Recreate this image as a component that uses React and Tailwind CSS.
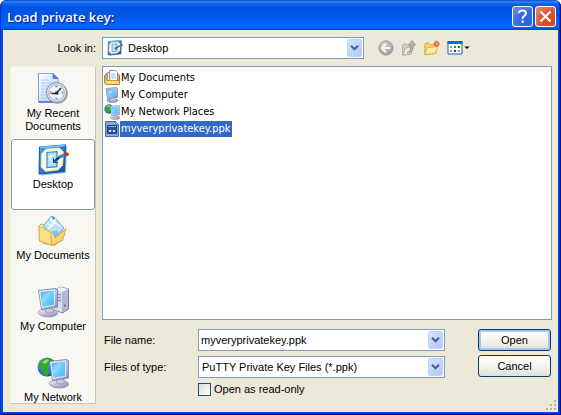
import React from "react";

const UI = "font-['Liberation_Sans',Arial,sans-serif] text-[11px] leading-[13px]";
const LIST = "font-['DejaVu_Sans_Condensed','DejaVu_Sans',sans-serif] text-[11px] leading-[16px]";

function Defs() {
  return (
    <svg className="absolute h-0 w-0" aria-hidden="true">
      <defs>
        <linearGradient id="screen" x1="0" y1="0" x2="1" y2="1">
          <stop offset="0" stopColor="#2b9bf0" />
          <stop offset=".5" stopColor="#6fd0fb" />
          <stop offset="1" stopColor="#43b2f6" />
        </linearGradient>
        <linearGradient id="metal" x1="0" y1="0" x2="1" y2="1">
          <stop offset="0" stopColor="#f4f4fb" />
          <stop offset="1" stopColor="#8f90bd" />
        </linearGradient>
        <linearGradient id="paper" x1="0" y1="0" x2="1" y2="1">
          <stop offset="0" stopColor="#ffffff" />
          <stop offset="1" stopColor="#a9cdfb" />
        </linearGradient>
        <linearGradient id="folder" x1="0" y1="0" x2="1" y2="1">
          <stop offset="0" stopColor="#fff3a6" />
          <stop offset="1" stopColor="#eebb3c" />
        </linearGradient>
        <linearGradient id="pad" x1="0" y1="0" x2="1" y2="1">
          <stop offset="0" stopColor="#4ba4f2" />
          <stop offset="1" stopColor="#0c4fae" />
        </linearGradient>
        <radialGradient id="globe" cx=".35" cy=".3" r=".8">
          <stop offset="0" stopColor="#6db4ff" />
          <stop offset="1" stopColor="#0a3fae" />
        </radialGradient>
        <radialGradient id="grayball" cx=".4" cy=".3" r=".8">
          <stop offset="0" stopColor="#d2d2d2" />
          <stop offset="1" stopColor="#959595" />
        </radialGradient>
      </defs>
    </svg>
  );
}

function RecentIcon() {
  return (
    <svg width="32" height="32" viewBox="0 0 32 32" aria-hidden="true">
      <path d="M1.500 .5H16l5 5V29.500H1.500z" fill="url(#paper)" stroke="#7ba3e0" />
      <path d="M16 .5v5h5z" fill="#4f86dc" stroke="#3d72cb" strokeWidth=".6" />
      <path d="M4 7h8M4 10h12M4 13h9M4 16h6M4 19h5M4 22h5M4 25h6" stroke="#a9c8f4" />
      <path d="M2 29h14" stroke="#5a89d6" strokeWidth="2" />
      <circle cx="20.500" cy="20.500" r="10.500" fill="#706e78" opacity=".55" />
      <circle cx="19.500" cy="19.500" r="10" fill="#e2e3ea" stroke="#8a8b9b" />
      <circle cx="19.500" cy="19.500" r="7.800" fill="#e9f6ff" stroke="#8db9e2" />
      <path d="M18.500 13.500h2M18.500 25.500h2M13.500 18.500v2M25.500 18.500v2" stroke="#f0663a" strokeWidth="1.600" />
      <path d="M24 15l-4.500 5M14.500 20.500h7" stroke="#1b2634" strokeWidth="1.500" fill="none" />
      <circle cx="19.500" cy="20" r="1.500" fill="#1b2634" />
    </svg>
  );
}

function DesktopIcon({ size = 32 }) {
  return (
    <svg width={size} height={size} viewBox="0 0 32 32" aria-hidden="true">
      <path d="M4 4L30 2.500 29 29 4 31.500z" fill="#5f6c85" opacity=".5" />
      <path d="M2.500 3L28.500.8 27.500 27.500 2 30z" fill="url(#pad)" stroke="#0d57b8" />
      <path d="M3 3.500L28 1.500" stroke="#7ecbfd" strokeWidth="1.500" />
      <path d="M9 5l13-1.200 4.500 4-.8 13.500L21 26 8.500 27.500 4 23l.5-13.500z" fill="#fdf8dc" stroke="#f2dd96" strokeWidth=".7" />
      <path d="M10 8.500l10-.8v15L10 23.500z" fill="#b4e1fc" stroke="#2a8ade" strokeWidth="1.200" />
      <path d="M12 12l4-2-3 8z" fill="#e6f6ff" />
      <path d="M16 17l5.500-4.500 1.500 2-5 3.500z" fill="#123a75" />
      <path d="M21.500 12.200l6-2.500.8 2-5.500 2.500z" fill="#3f92e2" stroke="#16539d" strokeWidth=".6" />
      <circle cx="29.800" cy="10.200" r="2" fill="#cf3a1c" />
      <path d="M16.500 14v4.500h4" stroke="#123a75" fill="none" />
    </svg>
  );
}

function DocumentsIcon() {
  return (
    <svg width="32" height="32" viewBox="0 0 32 32" aria-hidden="true">
      <path d="M5 29l13 2 11-12-4-2z" fill="#777" opacity=".5" />
      <path d="M2 11l2-2 5 1 3 3 14 3v3L14 30 2.500 26z" fill="url(#folder)" stroke="#d2a13a" />
      <path d="M6 11L14 1.500l3 .5 10 11-9 10z" fill="#b9e0fd" stroke="#67aaea" />
      <path d="M13.500 3l2 4 3-3M10 8l4 3 5-5M11 14l7-6 5 3" stroke="#fff" strokeWidth="1.400" fill="none" />
      <path d="M15 1.500l3 2-2 1z" fill="#2a78cb" />
      <path d="M2 11l12 6.500 1 12.500L2.500 26z" fill="#fbe083" stroke="#dcb04b" strokeWidth=".8" />
      <path d="M14 17.500L17 16l1 7 11-9.500-3.500 12L14.500 30.500z" fill="url(#folder)" stroke="#d09d30" strokeWidth=".8" />
      <path d="M15 18l5-3 2 4-4 4z" fill="#69b8f4" opacity=".75" />
    </svg>
  );
}

function Monitor({ x = 0, y = 0 }) {
  return (
    <g transform={`translate(${x} ${y})`}>
      <ellipse cx="11" cy="25.500" rx="9.500" ry="4" fill="#7d7e96" opacity=".7" />
      <ellipse cx="10" cy="24.500" rx="9.500" ry="3.800" fill="url(#metal)" stroke="#9596b7" strokeWidth=".7" />
      <path d="M8 20h7l1 4q-4 2-8 0z" fill="#c8c9e1" stroke="#8788b0" strokeWidth=".6" />
      <path d="M1 2.500L17.500.5l2.500 1V19L4 21.500z" fill="url(#metal)" stroke="#7778a6" strokeWidth=".8" />
      <path d="M2.500 4L17 2v15L4.500 19.500z" fill="url(#screen)" stroke="#e9f7ff" strokeWidth=".8" />
      <path d="M4 5.500L13 4Q10 12 5 15z" fill="#fff" opacity=".28" />
    </g>
  );
}

function ComputerIcon() {
  return (
    <svg width="32" height="32" viewBox="0 0 32 32" aria-hidden="true">
      <path d="M18 4l5-3 8.500 2v20l-6 4L18 24z" fill="#b4b5d7" stroke="#7778a6" />
      <path d="M18 4l7 2v20l-7-2z" fill="#dbdcee" />
      <path d="M18 4l5-3 8.500 2L25 6z" fill="#f2f2fa" />
      <path d="M20 8l4 1M20 11l4 1M20 14l4 1" stroke="#7879a7" />
      <circle cx="27.800" cy="19.500" r="1" fill="#5f6096" />
      <Monitor x={0.5} y={2} />
    </svg>
  );
}

function NetworkIcon({ size = 32 }) {
  return (
    <svg width={size} height={size} viewBox="0 0 32 32" aria-hidden="true">
      <circle cx="10" cy="10" r="9.500" fill="url(#globe)" />
      <path d="M3 5Q8-.5 14 1.500l2 4-4 2-2 4 3 3-3 5-4-2-1-5-4-3z" fill="#35a52c" />
      <path d="M5 5l5-3 2 2-4 3z" fill="#8ddc65" />
      <path d="M14 14l4-2v5l-4 2z" fill="#248c2c" />
      <Monitor x={11.5} y={2} />
    </svg>
  );
}

function SmallDocuments() {
  return (
    <svg width="16" height="16" viewBox="0 0 16 16" aria-hidden="true">
      <path d="M.5 5.500l2-2H14l1.500 2v9H2l-1.500-2z" fill="#e7b53a" stroke="#a8791c" />
      <path d="M3.500 2.500h7v9h-7z" fill="#fff" stroke="#8c9ab5" />
      <path d="M5.500.5h6l2 2v9h-8z" fill="#fff" stroke="#7e8fb0" />
      <path d="M7 4h4M7 6h5M7 8h5" stroke="#9db8df" />
      <path d="M.7 5.500l2 5H15.500v4H2L.7 13z" fill="#f8d566" stroke="#b58421" strokeWidth=".8" />
      <path d="M4 12h8" stroke="#fff3bd" />
    </svg>
  );
}

function SmallComputer() {
  return (
    <svg width="16" height="16" viewBox="0 0 16 16" aria-hidden="true">
      <ellipse cx="8.500" cy="13.500" rx="5.500" ry="2" fill="#a6a9c8" stroke="#74779f" strokeWidth=".6" />
      <path d="M6.500 10h4l.5 3H6z" fill="#d5d7e9" />
      <path d="M2 1.500L12.500.5l1 .7v9.300L3.500 12z" fill="url(#metal)" stroke="#7879a7" strokeWidth=".7" />
      <path d="M3 2.500l8.500-1v8.200L4.300 10.800z" fill="url(#screen)" />
      <path d="M4 3.500l5-.6-4 5z" fill="#fff" opacity=".4" />
    </svg>
  );
}

function KeyFileIcon() {
  return (
    <svg width="16" height="16" viewBox="0 0 16 16" aria-hidden="true">
      <path d="M1.500.5h10l3 3v12h-13z" fill="#86a9da" stroke="#3f6aa8" />
      <path d="M11.500.5v3h3z" fill="#dce9fa" stroke="#3f6aa8" strokeWidth=".7" />
      <path d="M3.500 4.500h9v8h-9z" fill="#2a559c" stroke="#1b3f7c" />
      <path d="M4 5h8v1H4z" fill="#86a9da" />
      <path d="M5 9h2v2H5zM9 9h2v2H9z" fill="#d3e3f8" />
      <path d="M7 9h1v1H7z" fill="#e66a3c" />
    </svg>
  );
}

function Chevron() {
  return (
    <svg width="9" height="6" viewBox="0 0 9 6" aria-hidden="true">
      <path d="M1 .8l3.500 3.500L8 .8" fill="none" stroke="#4d6185" strokeWidth="2.200" />
    </svg>
  );
}

const arrowBox =
  "flex h-[18px] w-[15px] items-center justify-center rounded-[2px] border border-[#c0d2fb] bg-gradient-to-br from-[#d6e2fe] to-[#b0c8f7]";

function Combo({ id, value, icon }) {
  return (
    <div className="relative">
      <select
        id={id}
        defaultValue={value}
        className={`${UI} block h-[22px] w-full appearance-none rounded-none border border-[#7f9db9] bg-white pr-5 text-black outline-none ${icon ? "pl-[25px]" : "pl-[3px]"}`}
      >
        <option>{value}</option>
      </select>
      {icon && <span className="pointer-events-none absolute top-[3px] left-[5px]">{icon}</span>}
      <span className={`${arrowBox} pointer-events-none absolute top-[2px] right-[2px]`}>
        <Chevron />
      </span>
    </div>
  );
}

const places = [
  { label: "My Recent Documents", icon: <RecentIcon /> },
  { label: "Desktop", icon: <DesktopIcon />, active: true },
  { label: "My Documents", icon: <DocumentsIcon /> },
  { label: "My Computer", icon: <ComputerIcon /> },
  { label: "My Network", icon: <NetworkIcon /> },
];

const files = [
  { name: "My Documents", icon: <SmallDocuments /> },
  { name: "My Computer", icon: <SmallComputer /> },
  { name: "My Network Places", icon: <NetworkIcon size={16} /> },
  { name: "myveryprivatekey.ppk", icon: <KeyFileIcon />, selected: true },
];

function TitleBar() {
  const base = "flex h-[21px] w-[21px] items-center justify-center rounded-[3px] border border-white";
  return (
    <header className="flex h-[30px] items-center gap-[2px] rounded-t-[7px] bg-[linear-gradient(180deg,#0646cf_0%,#2f87f8_6%,#0b5fe8_13%,#0053e1_28%,#0055e8_50%,#0066ff_82%,#0062fb_92%,#0040cc_100%)] pt-[3px] pr-[5px] pl-[7px]">
      <h1 className="flex-1 font-['Open_Sans','Noto_Sans',sans-serif] text-[13px] leading-[18px] font-semibold text-white [text-shadow:1px_1px_1px_#0a1883]">
        Load private key:
      </h1>
      <button aria-label="Help" className={`${base} bg-[radial-gradient(circle_at_80%_80%,#2b62ee,#3a6be4_50%,#7396ec)]`}>
        <svg width="13" height="15" viewBox="0 0 13 15" aria-hidden="true">
          <path d="M2.800 4.300C3 .6 10 .5 10 4.200c0 2.500-3.500 2.600-3.500 5.600" fill="none" stroke="#fff" strokeWidth="2" />
          <path d="M5.500 11.500h2.200v2.200H5.500z" fill="#fff" />
        </svg>
      </button>
      <button aria-label="Close" className={`${base} bg-[radial-gradient(circle_at_80%_80%,#d8431b,#dd5430_50%,#ea917c)]`}>
        <svg width="13" height="13" viewBox="0 0 13 13" aria-hidden="true">
          <path d="M1.500 1.500l10 10M11.500 1.500l-10 10" stroke="#fff" strokeWidth="2.200" />
        </svg>
      </button>
    </header>
  );
}

function Toolbar() {
  return (
    <div className="flex items-center gap-[7px] pl-[14px]">
      <button aria-label="Back">
        <svg className="block" width="16" height="16" viewBox="0 0 16 16" aria-hidden="true">
          <circle cx="8" cy="8" r="7.200" fill="url(#grayball)" stroke="#989898" strokeWidth=".8" />
          <path d="M8 3.500L3.700 8 8 12.500M4 8h8.500" fill="none" stroke="#f6f5ef" strokeWidth="2" />
        </svg>
      </button>
      <button aria-label="Up one level">
        <svg className="block" width="16" height="16" viewBox="0 0 16 16" aria-hidden="true">
          <path d="M1.500 5l1-1h3l1 1h3v2l2.500.5L10 14l-8.500 1.200z" fill="#d0cfc9" stroke="#a5a49e" strokeWidth=".8" />
          <path d="M4 8l8-1.200-2 7.200-8 1.200z" fill="#e6e5de" stroke="#a5a49e" strokeWidth=".8" />
          <path d="M6 12.500c3-.5 4-3 3.800-7.500H7.500L11 .6 14.500 5h-2.200c.2 5-2 8-6.300 7.500z" fill="#b9b8b3" stroke="#8c8b85" strokeWidth=".8" />
        </svg>
      </button>
      <button aria-label="Create new folder">
        <svg className="block" width="16" height="16" viewBox="0 0 16 16" aria-hidden="true">
          <path d="M.8 4.500l1-1.500h3l1.500 1.500H12v9l-11.200 1z" fill="#f5d362" stroke="#d0a03a" strokeWidth=".8" />
          <path d="M3.500 7.500l10.300-.8L11.500 13.300.9 14.600z" fill="#fdee9f" stroke="#d9ab40" strokeWidth=".8" />
          <path d="M12.500.8v6M9.500 3.800h6M10.400 1.700l4.200 4.200M14.600 1.700l-4.200 4.200" stroke="#ee5a2a" strokeWidth="1.400" />
          <circle cx="12.500" cy="3.800" r="1.200" fill="#ffc36a" />
        </svg>
      </button>
      <button aria-label="View menu">
        <svg className="block" width="23" height="16" viewBox="0 0 23 16" aria-hidden="true">
          <path d="M1 1.500h14v12.500H1z" fill="#fff" stroke="#0d62c9" />
          <path d="M.5 1h15v3H.5z" fill="#1169d6" />
          <path d="M3 6h2v2H3z" fill="#9b95b8" />
          <path d="M7 6h2v2H7z" fill="#3b6a98" />
          <path d="M11 6h2v2h-2z" fill="#178526" />
          <path d="M3 10h2v2H3z" fill="#ee6c43" />
          <path d="M7 10h2v2H7z" fill="#12399f" />
          <path d="M11 10h2v2h-2z" fill="#c9992e" />
          <path d="M17.500 6.500h5L20 9z" fill="#000" />
        </svg>
      </button>
    </div>
  );
}

function Places() {
  return (
    <nav className="flex w-[86px] shrink-0 flex-col border border-[#f4f1e4] border-r-[#c9c6b8] border-b-[#c9c6b8] bg-[#f8f7f2] pt-px">
      {places.map((p, i) => (
        <button
          key={p.label}
          className={`${UI} flex flex-col items-center gap-[2px] border pt-1 text-center text-black ${
            p.active ? "rounded-[3px] border-[#8a9bb0] bg-white" : "border-transparent"
          } ${i === places.length - 1 ? "h-[50px]" : "h-[71px]"}`}
        >
          <span className="h-8 w-8">{p.icon}</span>
          <span>{p.label}</span>
        </button>
      ))}
    </nav>
  );
}

function FileList() {
  return (
    <ul className="min-h-[200px] flex-1 border border-[#7f9db9] bg-white pt-[2px] pl-px">
      {files.map((f) => (
        <li key={f.name} className={`${LIST} flex h-[17px] items-center`}>
          <span className="h-4 w-4">{f.icon}</span>
          <span className={f.selected ? "bg-[#316ac5] px-px text-white" : "px-px text-black"}>{f.name}</span>
        </li>
      ))}
    </ul>
  );
}

const pushButton =
  "h-[22px] w-full rounded-[3px] border border-[#003c74] bg-gradient-to-b from-white via-[#f5f4ee] to-[#e3dfd3] text-black";

function Form() {
  return (
    <form className={`${UI} flex pl-[2px] text-black`} onSubmit={(e) => e.preventDefault()}>
      <div className="grid flex-1 grid-cols-[94px_1fr] items-center gap-y-[5px]">
        <label htmlFor="name">File name:</label>
        <div className="relative">
          <input
            id="name"
            type="text"
            defaultValue="myveryprivatekey.ppk"
            className="block h-[22px] w-full border border-[#7f9db9] bg-white pr-5 pl-[2px] outline-none"
          />
          <button type="button" aria-label="Recent names" className={`${arrowBox} absolute top-[2px] right-[2px]`}>
            <Chevron />
          </button>
        </div>
        <label htmlFor="type">Files of type:</label>
        <Combo id="type" value="PuTTY Private Key Files (*.ppk)" />
        <label className="col-start-2 flex items-center gap-[3px]">
          <input
            type="checkbox"
            className="h-[13px] w-[13px] appearance-none border border-[#1c5180] bg-gradient-to-br from-[#dcdcd7] to-white"
          />
          Open as read-only
        </label>
      </div>
      <div className="ml-[33px] flex w-[74px] flex-col gap-1 pr-px">
        <button className={`${pushButton} shadow-[inset_0_0_0_2px_#a9c3f3]`}>Open</button>
        <button type="button" className={pushButton}>
          Cancel
        </button>
      </div>
    </form>
  );
}

export default function App() {
  return (
    <div className="relative flex min-h-screen flex-col rounded-t-[7px] bg-[#0a48e0]">
      <Defs />
      <TitleBar />
      <main className="mx-[3px] mb-[3px] flex flex-1 flex-col bg-[#ece9d8] pt-[7px] pr-[6px] pb-2 pl-[7px]">
        <div className="flex items-center">
          <label htmlFor="look" className={`${UI} w-[92px] shrink-0 pr-[6px] text-right text-black`}>
            Look in:
          </label>
          <div className="max-w-[262px] flex-1">
            <Combo id="look" value="Desktop" icon={<DesktopIcon size={16} />} />
          </div>
          <Toolbar />
        </div>
        <div className="mt-[7px] flex flex-1 gap-[6px]">
          <Places />
          <section className="flex min-w-0 flex-1 flex-col gap-[9px] pb-2">
            <FileList />
            <Form />
          </section>
        </div>
      </main>
      <svg className="absolute right-1 bottom-1" width="12" height="12" viewBox="0 0 12 12" aria-hidden="true">
        <path d="M9 1h2v2H9zM5 5h2v2H5zM9 5h2v2H9zM1 9h2v2H1zM5 9h2v2H5zM9 9h2v2H9z" fill="#b8b4a2" />
      </svg>
      <div className="pointer-events-none absolute inset-0 rounded-t-[7px] shadow-[inset_1px_0_#0831d9,inset_-1px_-1px_#00138c,inset_-2px_-2px_#0033c8]" />
    </div>
  );
}
